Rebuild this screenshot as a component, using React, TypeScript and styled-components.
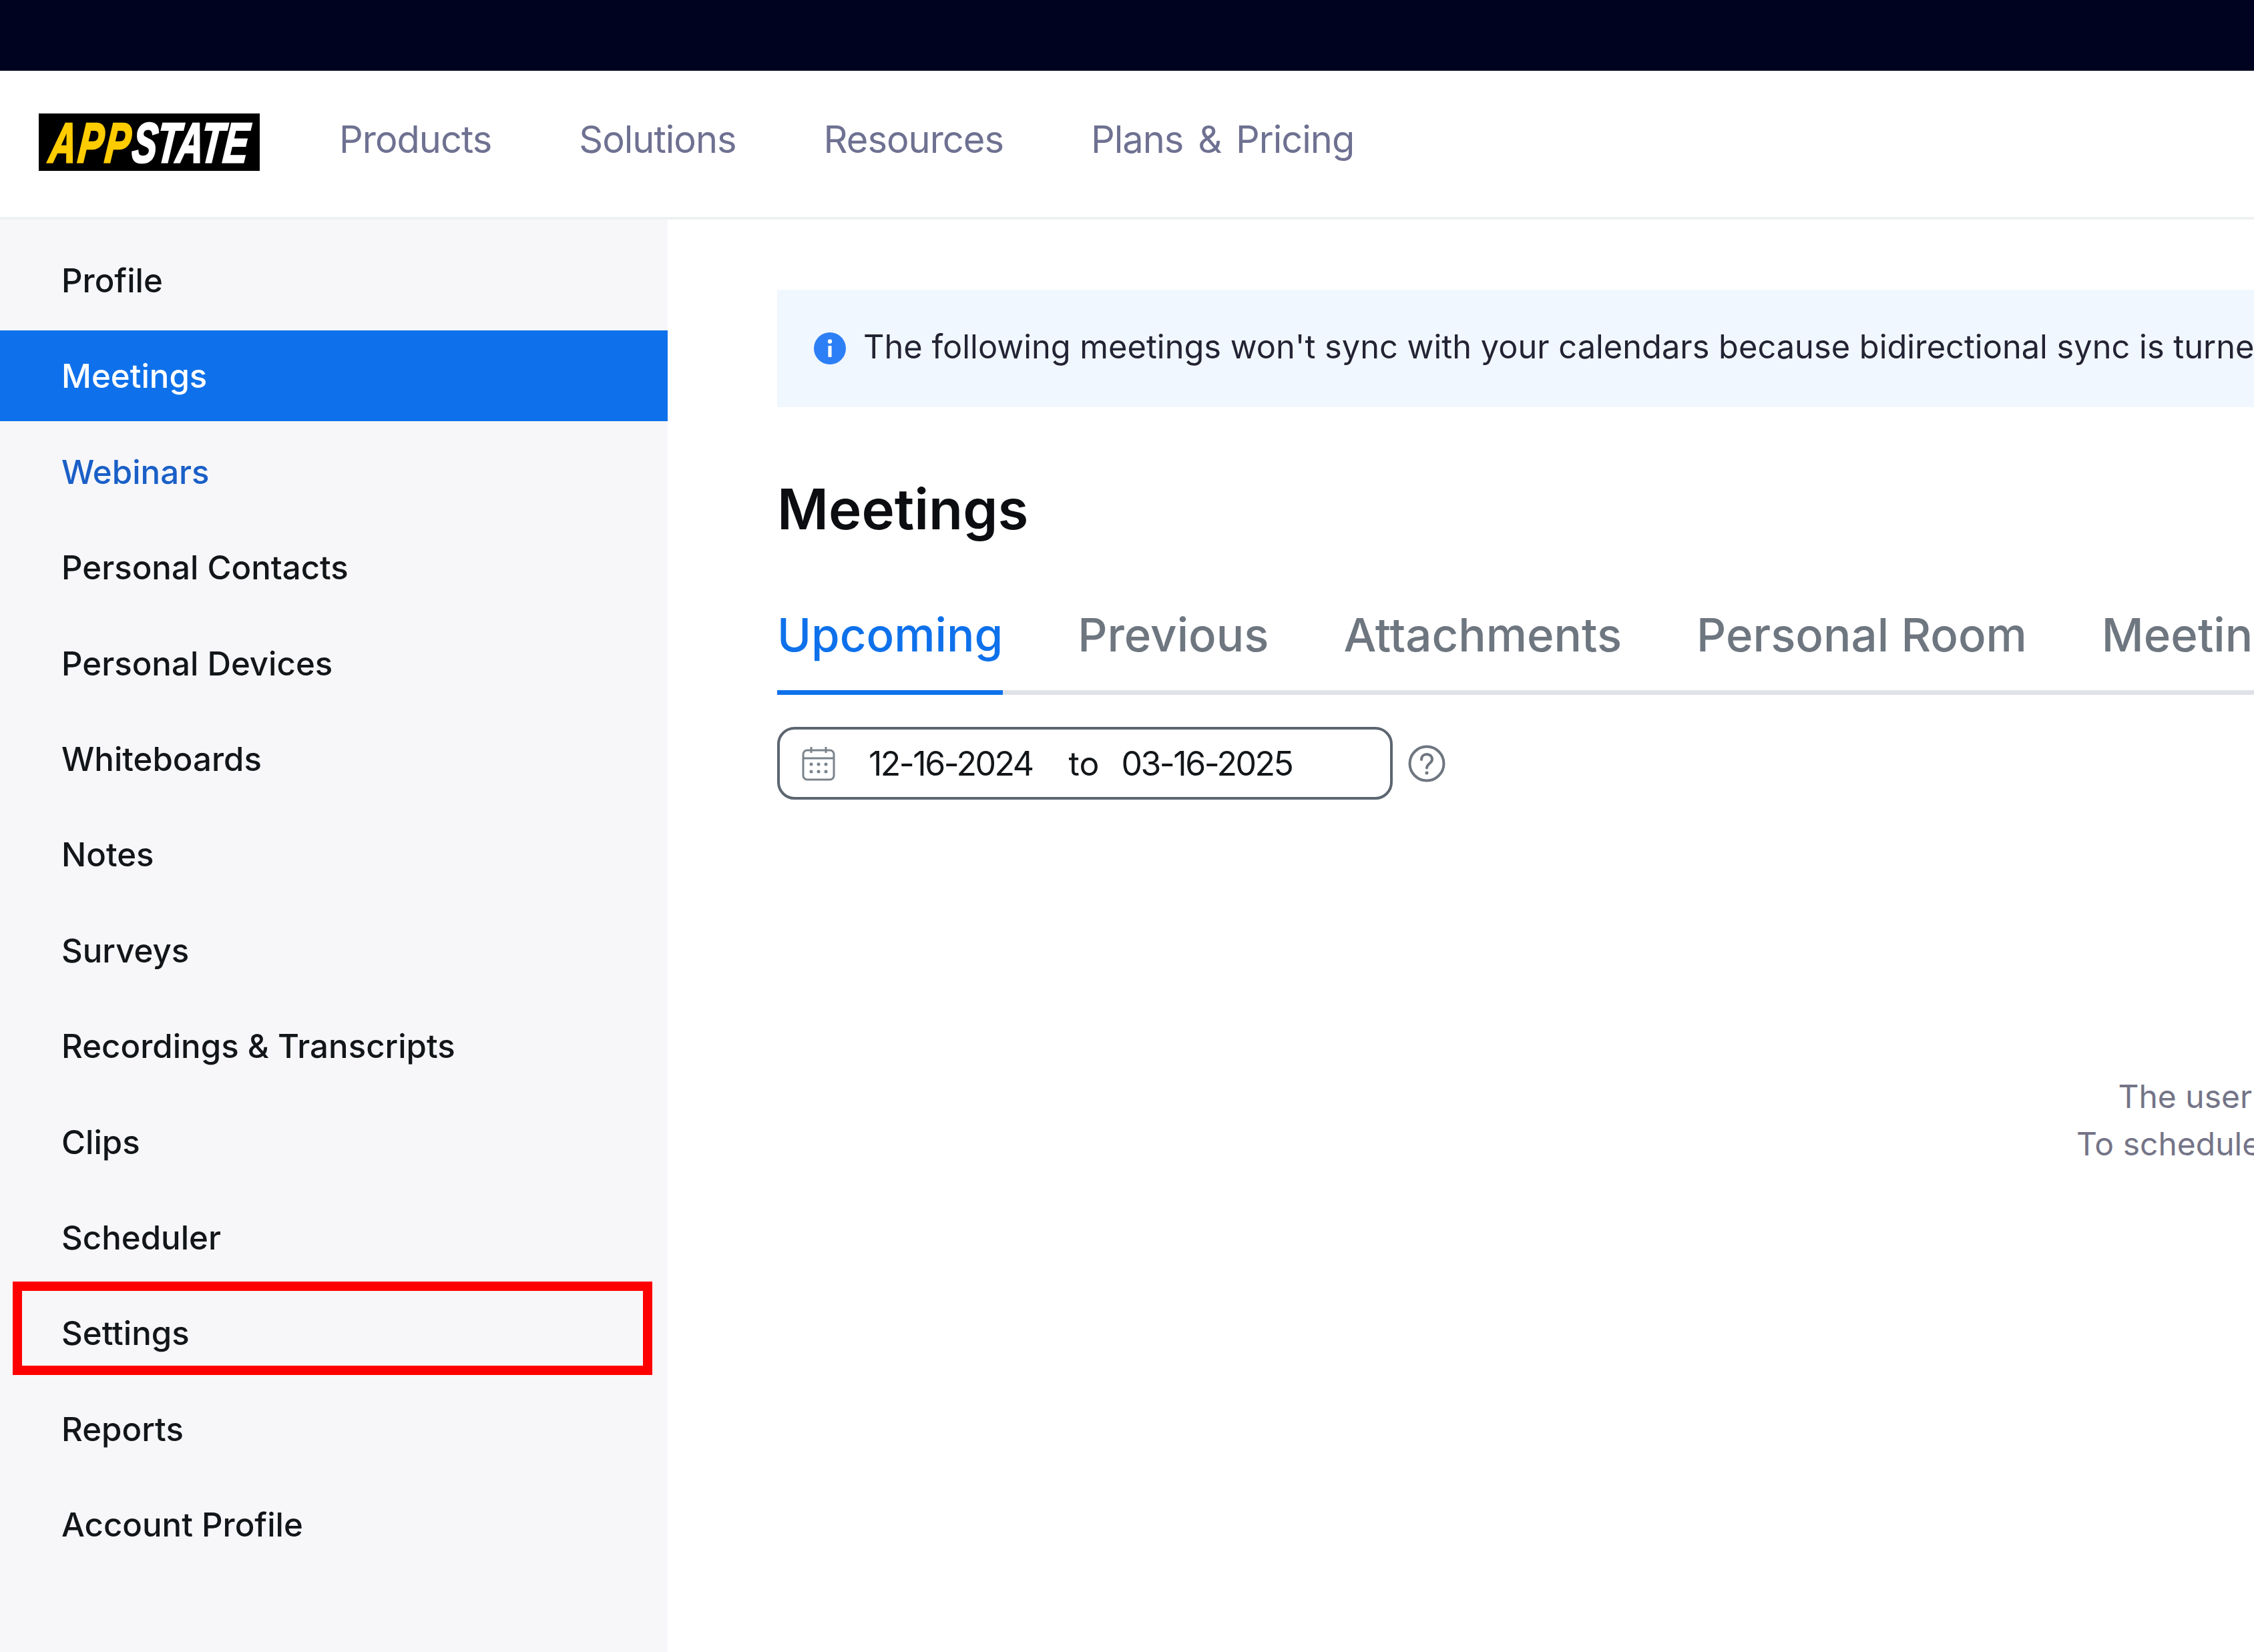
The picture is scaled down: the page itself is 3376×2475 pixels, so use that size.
import React from 'react';
import styled, { createGlobalStyle } from 'styled-components';

const GlobalStyle = createGlobalStyle`
  html, body {
    margin: 0;
    padding: 0;
    width: 3376px;
    height: 2475px;
    overflow: hidden;
    background: #fff;
    font-family: Inter, "Liberation Sans", sans-serif;
  }
  * { box-sizing: border-box; }
`;

const Page = styled.div`
  display: flex;
  flex-direction: column;
  width: 3376px;
  height: 2475px;
  overflow: hidden;
`;

const TopBar = styled.div`
  height: 106px;
  flex-shrink: 0;
  background: #00031f;
`;

const Header = styled.header`
  display: flex;
  align-items: center;
  height: 223px;
  flex-shrink: 0;
  padding-left: 58px;
  background: #fff;
  border-bottom: 4px solid #eef0f2;
`;

const LogoMark = styled.svg`
  display: block;
  width: 331px;
  height: 86px;
  margin-top: -5px;
  flex-shrink: 0;
`;

const Nav = styled.nav`
  display: flex;
  gap: 131px;
  margin-left: 119px;
  margin-top: -14px;
`;

const NavLink = styled.a`
  font-size: 56px;
  line-height: 70px;
  letter-spacing: -1px;
  word-spacing: 7px;
  color: #6e7191;
  white-space: nowrap;
`;

const Body = styled.div`
  display: flex;
  flex: 1;
  min-height: 0;
`;

const Sidebar = styled.aside`
  display: flex;
  flex-direction: column;
  gap: 7.4px;
  width: 1000px;
  flex-shrink: 0;
  padding-top: 23px;
  background: #f7f7fa;
`;

const SideItem = styled.a<{ $active?: boolean; $link?: boolean }>`
  position: relative;
  display: flex;
  align-items: center;
  height: 136px;
  flex-shrink: 0;
  padding-left: 92px;
  font-size: 49.2px;
  font-weight: ${p => (p.$active ? 500 : 450)};
  color: ${p => (p.$active ? '#fff' : p.$link ? '#1a5fc7' : '#131619')};
  background: ${p => (p.$active ? '#0e71eb' : 'transparent')};
  white-space: nowrap;
`;

const Highlight = styled.span`
  position: absolute;
  left: 19px;
  top: -9px;
  width: 958px;
  height: 140px;
  border: 14px solid #ff0000;
`;

const Main = styled.main`
  flex: 1;
  min-width: 0;
  padding: 105px 0 0 164px;
  overflow: hidden;
`;

const Banner = styled.div`
  display: flex;
  align-items: center;
  gap: 26px;
  height: 176px;
  padding-left: 55px;
  background: #f1f7ff;
  white-space: nowrap;
  overflow: hidden;
`;

const BannerText = styled.span`
  margin-top: -6px;
  font-size: 48.75px;
  color: #232333;
`;

const InfoIcon = styled.svg`
  width: 48px;
  height: 48px;
  flex-shrink: 0;
`;

const Title = styled.h1`
  margin: 103px 0 0;
  font-size: 83.5px;
  line-height: 100px;
  font-weight: 600;
  color: #0b0d10;
`;

const TabBar = styled.div`
  display: flex;
  gap: 112px;
  margin-top: 88px;
  border-bottom: 7px solid #dfe3e8;
`;

const Tab = styled.a<{ $active?: boolean }>`
  margin-bottom: -7px;
  padding-bottom: 33px;
  font-size: 69px;
  line-height: 100px;
  font-weight: 500;
  color: ${p => (p.$active ? '#0e71eb' : '#6e7680')};
  border-bottom: 7px solid ${p => (p.$active ? '#0e71eb' : 'transparent')};
  white-space: nowrap;
  flex-shrink: 0;
`;

const DateRow = styled.div`
  display: flex;
  align-items: center;
  gap: 23px;
  margin-top: 48px;
`;

const DateBox = styled.div`
  display: flex;
  align-items: center;
  width: 922px;
  height: 109px;
  padding-left: 33px;
  border: 4px solid #5c6670;
  border-radius: 26px;
  font-size: 50px;
  color: #131619;
`;

const CalendarIcon = styled.svg`
  width: 50px;
  height: 52px;
  flex-shrink: 0;
`;

const DateValue = styled.span<{ $gap: number; $tight?: boolean }>`
  margin-left: ${p => p.$gap}px;
  letter-spacing: ${p => (p.$tight ? '-2.5px' : '0')};
  white-space: nowrap;
`;

const HelpIcon = styled.svg`
  width: 56px;
  height: 56px;
  flex-shrink: 0;
`;

const Empty = styled.div`
  width: 4857px;
  margin-top: 409px;
  text-align: center;
  font-size: 48px;
  line-height: 71px;
  color: #747487;
`;

const items = [
  'Profile',
  'Meetings',
  'Webinars',
  'Personal Contacts',
  'Personal Devices',
  'Whiteboards',
  'Notes',
  'Surveys',
  'Recordings & Transcripts',
  'Clips',
  'Scheduler',
  'Settings',
  'Reports',
  'Account Profile',
];

const tabs = ['Upcoming', 'Previous', 'Attachments', 'Personal Room', 'Meeting Templates'];

export default function App() {
  return (
    <Page>
      <GlobalStyle />
      <TopBar />
      <Header>
        <LogoMark viewBox="0 0 331 86">
          <rect width="331" height="86" fill="#000" />
          <text
            transform="translate(14 73) skewX(-6) scale(.66 1)"
            fontFamily="Liberation Sans"
            fontWeight="700"
            fontStyle="italic"
            fontSize="84"
            strokeWidth="3"
          >
            <tspan fill="#ffcc00" stroke="#ffcc00" letterSpacing="5">APP</tspan>
            <tspan fill="#fff" stroke="#fff">STATE</tspan>
          </text>
        </LogoMark>
        <Nav>
          <NavLink>Products</NavLink>
          <NavLink>Solutions</NavLink>
          <NavLink>Resources</NavLink>
          <NavLink>Plans &amp; Pricing</NavLink>
        </Nav>
      </Header>
      <Body>
        <Sidebar>
          {items.map(item => (
            <SideItem key={item} $active={item === 'Meetings'} $link={item === 'Webinars'}>
              {item}
              {item === 'Settings' && <Highlight />}
            </SideItem>
          ))}
        </Sidebar>
        <Main>
          <Banner>
            <InfoIcon viewBox="0 0 48 48">
              <circle cx="24" cy="24" r="24" fill="#2d7ff5" />
              <circle cx="24" cy="13.5" r="3.2" fill="#fff" />
              <rect x="21.4" y="20" width="5.2" height="17" rx="1" fill="#fff" />
            </InfoIcon>
            <BannerText>The following meetings won't sync with your calendars because bidirectional sync is turned off.</BannerText>
          </Banner>
          <Title>Meetings</Title>
          <TabBar>
            {tabs.map(tab => (
              <Tab key={tab} $active={tab === 'Upcoming'}>
                {tab}
              </Tab>
            ))}
          </TabBar>
          <DateRow>
            <DateBox>
              <CalendarIcon viewBox="0 0 50 52" fill="none" stroke="#7b838c" strokeWidth="3">
                <rect x="2" y="6" width="46" height="44" rx="6" />
                <path d="M2 18h46M14 1v9M36 1v9" />
                <g fill="#7b838c" stroke="none">
                  <circle cx="14" cy="27" r="2.5" />
                  <circle cx="25" cy="27" r="2.5" />
                  <circle cx="36" cy="27" r="2.5" />
                  <circle cx="14" cy="38" r="2.5" />
                  <circle cx="25" cy="38" r="2.5" />
                  <circle cx="36" cy="38" r="2.5" />
                </g>
              </CalendarIcon>
              <DateValue $gap={50} $tight>12-16-2024</DateValue>
              <DateValue $gap={54}>to</DateValue>
              <DateValue $gap={33} $tight>03-16-2025</DateValue>
            </DateBox>
            <HelpIcon viewBox="0 0 56 56" fill="none" stroke="#6e7680" strokeWidth="4">
              <circle cx="28" cy="28" r="25.5" />
              <path d="M20 22c0-5 3.6-8 8-8s8 3 8 7.500c0 6.500-8 6.500-8 13" strokeLinecap="round" />
              <circle cx="28" cy="42" r="2.500" fill="#6e7680" stroke="none" />
            </HelpIcon>
          </DateRow>
          <Empty>
            The user has no upcoming meetings.
            <br />
            To schedule a new meeting click Schedule
          </Empty>
        </Main>
      </Body>
    </Page>
  );
}
